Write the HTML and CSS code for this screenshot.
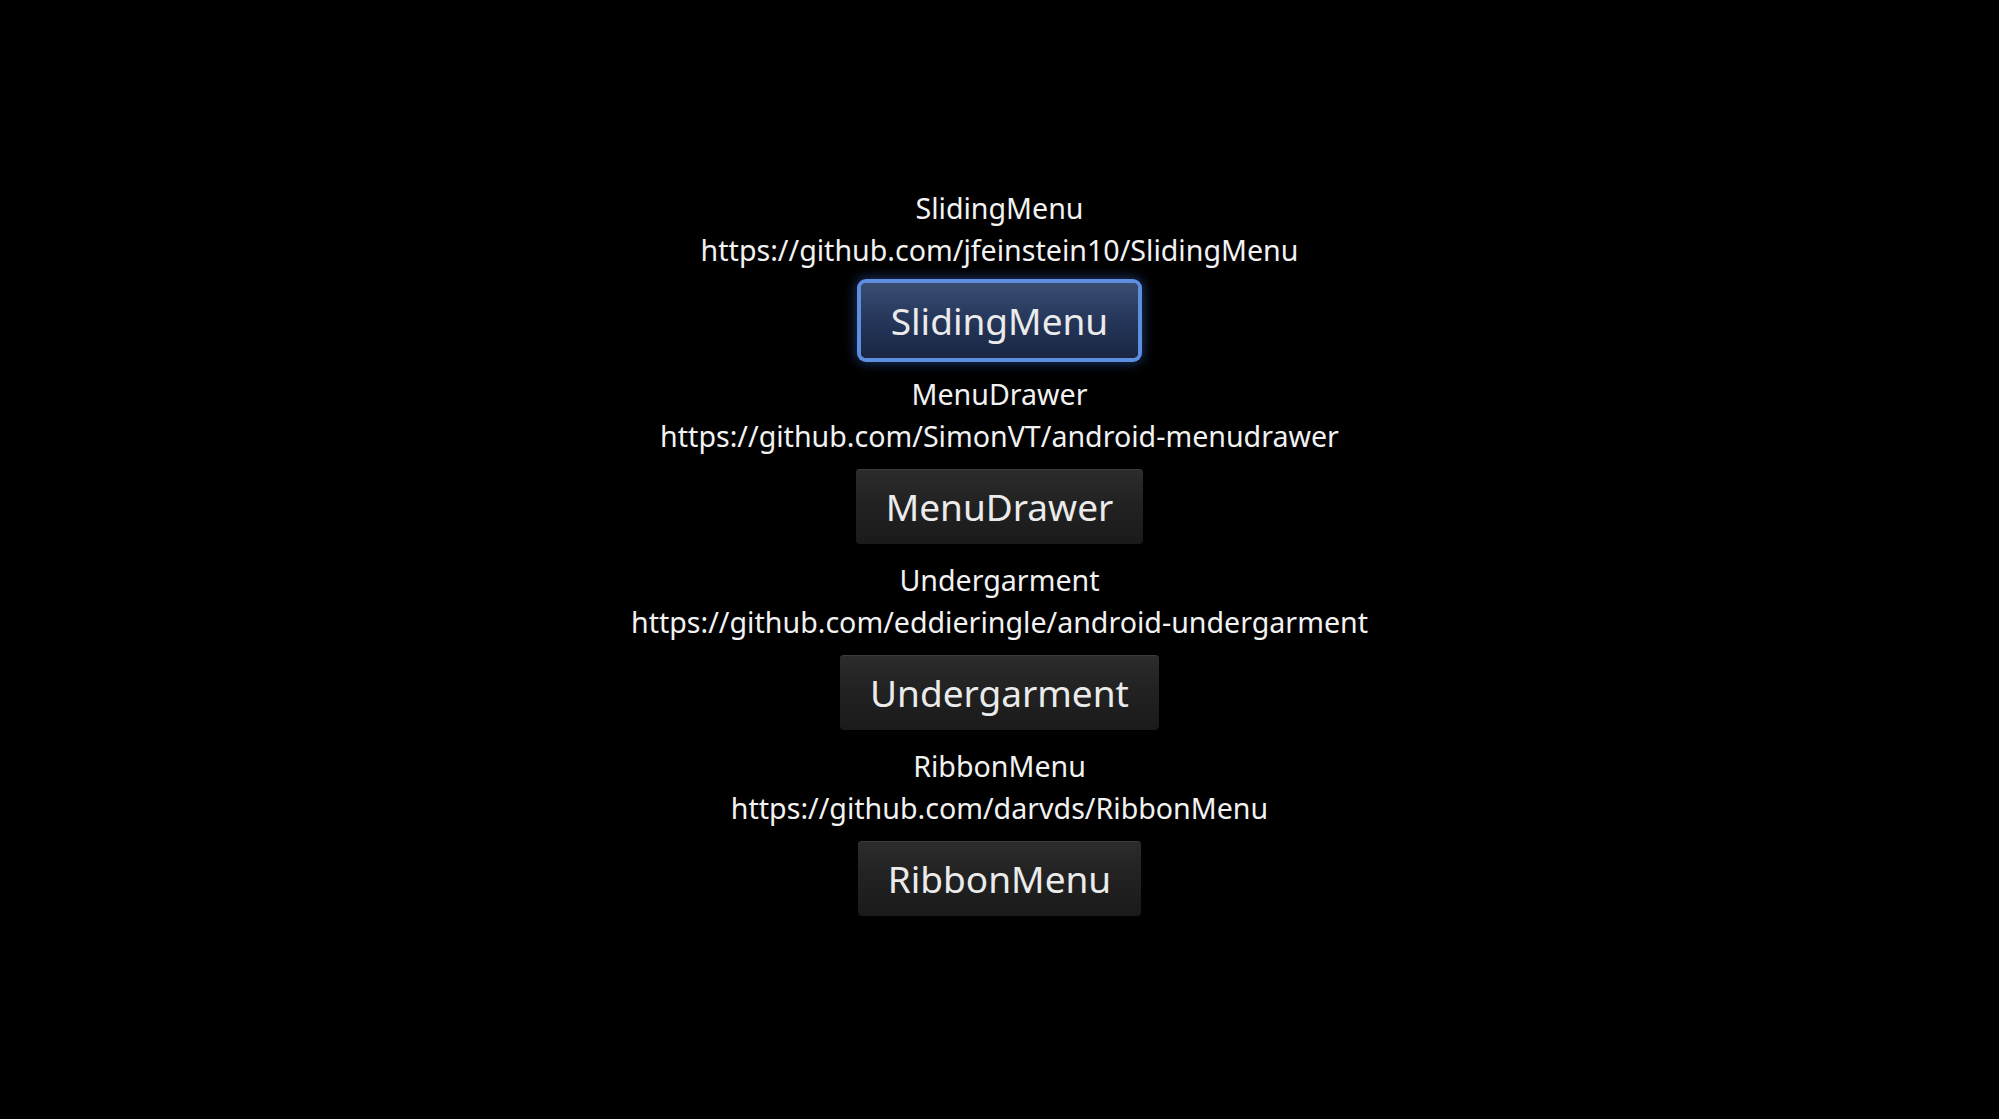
FILE: index.html
```html
<!DOCTYPE html>
<html lang="en">
<head>
<meta charset="utf-8">
<title>Menus</title>
<link rel="stylesheet" href="styles.css">
</head>
<body>
<main class="list">
  <section class="item">
    <div class="label">SlidingMenu</div>
    <div class="label">https://github.com/jfeinstein10/SlidingMenu</div>
    <button class="btn btn-focused">SlidingMenu</button>
  </section>
  <section class="item">
    <div class="label">MenuDrawer</div>
    <div class="label">https://github.com/SimonVT/android-menudrawer</div>
    <button class="btn">MenuDrawer</button>
  </section>
  <section class="item">
    <div class="label">Undergarment</div>
    <div class="label">https://github.com/eddieringle/android-undergarment</div>
    <button class="btn">Undergarment</button>
  </section>
  <section class="item">
    <div class="label">RibbonMenu</div>
    <div class="label">https://github.com/darvds/RibbonMenu</div>
    <button class="btn">RibbonMenu</button>
  </section>
</main>
</body>
</html>
```
FILE: styles.css
```css
html, body {
  margin: 0;
  padding: 0;
  background: #000;
  height: 100%;
}
body {
  font-family: "Noto Sans", "Open Sans", "DejaVu Sans", sans-serif;
  color: #f2f2f2;
}
.list {
  display: flex;
  flex-direction: column;
  align-items: center;
  padding-top: 187px;
}
.item {
  display: flex;
  flex-direction: column;
  align-items: center;
}
.label {
  font-size: 28.6px;
  line-height: 42px;
  white-space: nowrap;
}
.btn {
  margin: 12px 0 15px;
  height: 75px;
  padding: 0 30px;
  font-family: inherit;
  font-size: 37px;
  color: #ebebeb;
  border: none;
  border-radius: 4px;
  background: linear-gradient(to bottom, #2c2c2c 0%, #222 45%, #1a1a1a 100%);
  box-shadow: inset 0 1px 0 rgba(255,255,255,0.08);
  cursor: pointer;
}
.btn-focused {
  background: linear-gradient(to bottom, #3a4d72 0%, #25365a 50%, #1a2642 100%);
  box-shadow: 0 0 0 4px #5d8ee0, 0 0 12px 5px rgba(60,110,210,0.5);
  border-radius: 5px;
}
```
